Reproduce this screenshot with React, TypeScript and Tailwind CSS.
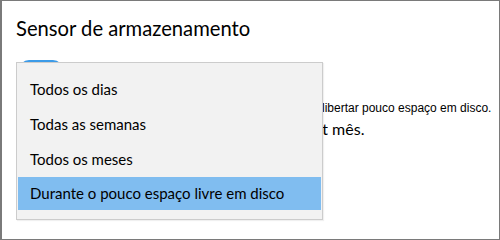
const OPTIONS = [
  "Todos os dias",
  "Todas as semanas",
  "Todos os meses",
  "Durante o pouco espaço livre em disco",
];

export default function App() {
  const selected = 3;

  return (
    <div className="relative h-[240px] w-[500px] overflow-hidden border border-l-2 border-[#7a7a7a] bg-white font-['Lato',sans-serif] text-black">
      <div className="flex flex-col pl-[14px] pt-[13px]">
        <h1 className="text-[20.2px] leading-[28px] font-normal">Sensor de armazenamento</h1>

        {/* toggle under the open menu */}
        <div className="mt-[18px] ml-[3px] h-[20px] w-[44px] rounded-full bg-[#3c9be8]" />

        <p className="mt-[20px] flex whitespace-nowrap font-['Liberation_Sans',sans-serif] text-[12px] leading-[16px]">
          <span className="flex w-[306px] shrink-0 justify-end overflow-hidden">
            O Sensor de Armazenamento é executado quando é necessário
          </span>
          <span>libertar pouco espaço em disco.</span>
        </p>
        <p className="mt-[2px] flex whitespace-nowrap text-[16px] leading-[22px]">
          <span className="flex w-[312px] shrink-0 justify-end overflow-hidden">
            Limpar os ficheiros temporários da Internet
          </span>
          <span>&nbsp;mês.</span>
        </p>
      </div>

      {/* open dropdown */}
      <ul className="absolute top-[61px] left-[14px] w-[307px] border border-[#cccccc] bg-[#f2f2f2] px-px pt-[9px] pb-[9px] shadow-[1px_1px_1px_rgba(0,0,0,0.06)]">
        {OPTIONS.map((opt, i) => (
          <li
            key={opt}
            className={`flex items-center pl-[12px] text-[15px] ${
              i === selected ? "h-[33px] bg-[#80bdf0]" : "h-[35px]"
            }`}
          >
            {opt}
          </li>
        ))}
      </ul>
    </div>
  );
}
